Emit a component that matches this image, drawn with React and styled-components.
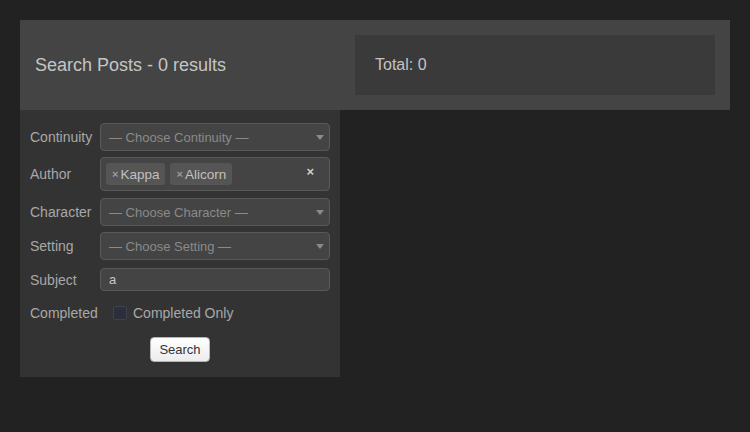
import React from "react";
import styled, { createGlobalStyle } from "styled-components";

const Global = createGlobalStyle`
  html, body { margin: 0; padding: 0; background: #222222; }
  body { font-family: "Liberation Sans", Arial, sans-serif; }
`;

const Page = styled.div`
  padding: 20px;
`;

const Header = styled.div`
  width: 710px;
  height: 90px;
  background: #444444;
  display: flex;
  align-items: center;
  box-sizing: border-box;
  padding: 0 15px;
`;

const Title = styled.h1`
  margin: 0;
  width: 320px;
  font-size: 18px;
  font-weight: normal;
  color: #c4c4c4;
`;

const TotalBox = styled.div`
  width: 360px;
  height: 60px;
  background: #3a3a3a;
  box-sizing: border-box;
  padding-left: 20px;
  display: flex;
  align-items: center;
  color: #c4c4c4;
  font-size: 16px;
`;

const Panel = styled.div`
  width: 320px;
  background: #333333;
  box-sizing: border-box;
  padding: 13px 10px 15px 10px;
`;

const Row = styled.div`
  display: grid;
  grid-template-columns: 70px 230px;
  align-items: center;
  margin-bottom: ${(p) => p.$mb ?? 6}px;
  min-height: ${(p) => p.$h ?? 28}px;
`;

const Label = styled.label`
  font-size: 14px;
  color: #a8a8a8;
`;

const Field = styled.div`
  position: relative;
  box-sizing: border-box;
  height: ${(p) => p.$h ?? 28}px;
  background: #444444;
  border: 1px solid #595959;
  border-radius: 4px;
  display: flex;
  align-items: center;
  padding: 0 8px;
  font-size: 13px;
  color: #8a8a8a;
`;

const Arrow = styled.span`
  position: absolute;
  right: 5px;
  top: 50%;
  margin-top: -2px;
  width: 0;
  height: 0;
  border-left: 4px solid transparent;
  border-right: 4px solid transparent;
  border-top: 5px solid #8a8a8a;
`;

const TagBox = styled(Field)`
  padding: 0 5px;
  gap: 5px;
`;

const Tag = styled.span`
  height: 22px;
  background: #555555;
  border-radius: 3px;
  display: flex;
  align-items: center;
  padding: 0 6px 0 6px;
  color: #c0c0c0;
  font-size: 13.5px;
`;

const TagX = styled.span`
  color: #9a9a9a;
  font-size: 11px;
  font-weight: bold;
  margin-right: 2px;
`;

const Clear = styled.span`
  position: absolute;
  right: 15px;
  top: 6px;
  color: #cfcfcf;
  font-size: 13px;
  font-weight: bold;
`;

const TextInput = styled(Field)`
  color: #c8c8c8;
`;

const CheckRow = styled.div`
  display: flex;
  align-items: center;
  padding-left: 13px;
  font-size: 14px;
  color: #a8a8a8;
`;

const Box = styled.span`
  width: 12px;
  height: 12px;
  background: #2b2f3b;
  border: 1px solid #3d4150;
  border-radius: 2px;
  margin-right: 6px;
`;

const ButtonRow = styled.div`
  display: flex;
  justify-content: center;
`;

const Button = styled.button`
  height: 25px;
  width: 60px;
  font-family: "Liberation Sans", Arial, sans-serif;
  font-size: 13px;
  color: #333;
  background: linear-gradient(#ffffff, #ececec);
  border: 1px solid #b5b5b5;
  border-radius: 4px;
  padding: 0;
`;

export default function App() {
  return (
    <Page>
      <Global />
      <Header>
        <Title>Search Posts - 0 results</Title>
        <TotalBox>Total: 0</TotalBox>
      </Header>
      <Panel>
        <Row>
          <Label>Continuity</Label>
          <Field>— Choose Continuity —<Arrow /></Field>
        </Row>
        <Row $h={34} $mb={7}>
          <Label>Author</Label>
          <TagBox $h={34}>
            <Tag><TagX>×</TagX>Kappa</Tag>
            <Tag><TagX>×</TagX>Alicorn</Tag>
            <Clear>×</Clear>
          </TagBox>
        </Row>
        <Row>
          <Label>Character</Label>
          <Field>— Choose Character —<Arrow /></Field>
        </Row>
        <Row $mb={8}>
          <Label>Setting</Label>
          <Field>— Choose Setting —<Arrow /></Field>
        </Row>
        <Row $h={23} $mb={8}>
          <Label>Subject</Label>
          <TextInput $h={23}>a</TextInput>
        </Row>
        <Row $mb={10}>
          <Label>Completed</Label>
          <CheckRow><Box />Completed Only</CheckRow>
        </Row>
        <ButtonRow>
          <Button>Search</Button>
        </ButtonRow>
      </Panel>
    </Page>
  );
}
